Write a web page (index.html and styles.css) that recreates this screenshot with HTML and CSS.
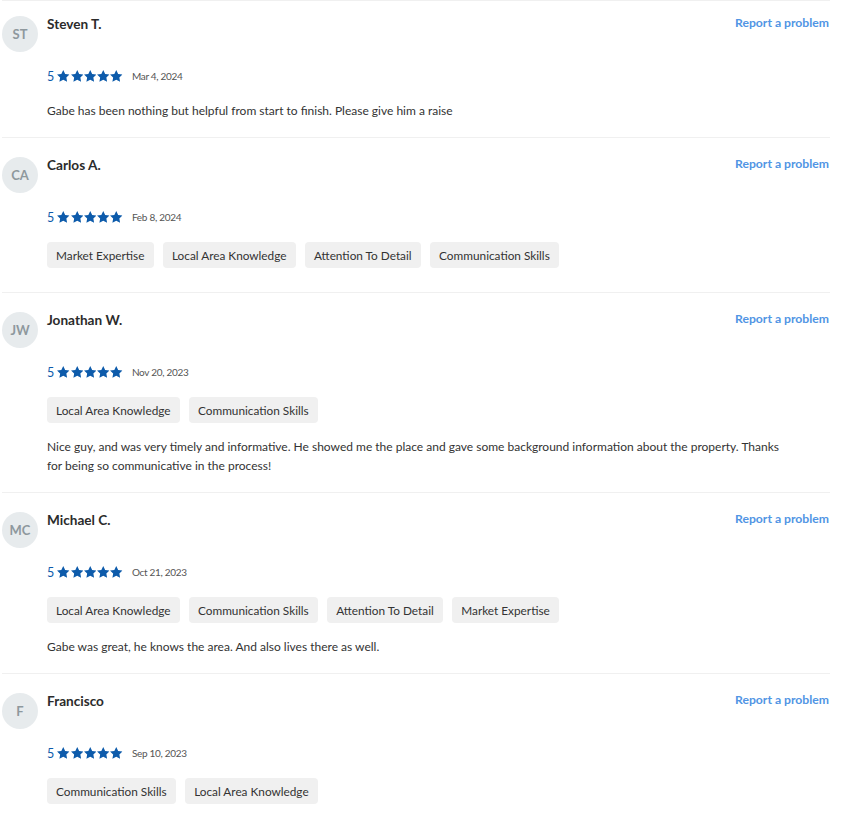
FILE: index.html
```html
<!DOCTYPE html>
<html lang="en">
<head>
<meta charset="utf-8">
<title>Reviews</title>
<link rel="stylesheet" href="styles.css">
</head>
<body>
<svg width="0" height="0" class="defs" aria-hidden="true">
  <defs>
    <symbol id="star" viewBox="2 2 20 19.3">
      <path d="M12 2l3.09 6.26L22 9.27l-5 4.87 1.18 6.88L12 17.77l-6.18 3.25L7 14.14 2 9.27l6.91-1.01L12 2z"/>
    </symbol>
  </defs>
</svg>
<div class="reviews">
  <div class="review">
    <div class="avatar">ST</div>
    <div class="content">
      <div class="head"><span class="name">Steven T.</span><a class="report" href="#">Report a problem</a></div>
      <div class="rating"><span class="score">5</span><span class="stars"><svg><use href="#star"/></svg><svg><use href="#star"/></svg><svg><use href="#star"/></svg><svg><use href="#star"/></svg><svg><use href="#star"/></svg></span><span class="date">Mar 4, 2024</span></div>
      <p class="comment">Gabe has been nothing but helpful from start to finish. Please give him a raise</p>
    </div>
  </div>
  <div class="review">
    <div class="avatar">CA</div>
    <div class="content">
      <div class="head"><span class="name">Carlos A.</span><a class="report" href="#">Report a problem</a></div>
      <div class="rating"><span class="score">5</span><span class="stars"><svg><use href="#star"/></svg><svg><use href="#star"/></svg><svg><use href="#star"/></svg><svg><use href="#star"/></svg><svg><use href="#star"/></svg></span><span class="date">Feb 8, 2024</span></div>
      <div class="tags"><span class="tag">Market Expertise</span><span class="tag">Local Area Knowledge</span><span class="tag">Attention To Detail</span><span class="tag">Communication Skills</span></div>
    </div>
  </div>
  <div class="review">
    <div class="avatar">JW</div>
    <div class="content">
      <div class="head"><span class="name">Jonathan W.</span><a class="report" href="#">Report a problem</a></div>
      <div class="rating"><span class="score">5</span><span class="stars"><svg><use href="#star"/></svg><svg><use href="#star"/></svg><svg><use href="#star"/></svg><svg><use href="#star"/></svg><svg><use href="#star"/></svg></span><span class="date">Nov 20, 2023</span></div>
      <div class="tags"><span class="tag">Local Area Knowledge</span><span class="tag">Communication Skills</span></div>
      <p class="comment">Nice guy, and was very timely and informative. He showed me the place and gave some background information about the property. Thanks for being so communicative in the process!</p>
    </div>
  </div>
  <div class="review">
    <div class="avatar">MC</div>
    <div class="content">
      <div class="head"><span class="name">Michael C.</span><a class="report" href="#">Report a problem</a></div>
      <div class="rating"><span class="score">5</span><span class="stars"><svg><use href="#star"/></svg><svg><use href="#star"/></svg><svg><use href="#star"/></svg><svg><use href="#star"/></svg><svg><use href="#star"/></svg></span><span class="date">Oct 21, 2023</span></div>
      <div class="tags"><span class="tag">Local Area Knowledge</span><span class="tag">Communication Skills</span><span class="tag">Attention To Detail</span><span class="tag">Market Expertise</span></div>
      <p class="comment">Gabe was great, he knows the area. And also lives there as well.</p>
    </div>
  </div>
  <div class="review">
    <div class="avatar">F</div>
    <div class="content">
      <div class="head"><span class="name">Francisco</span><a class="report" href="#">Report a problem</a></div>
      <div class="rating"><span class="score">5</span><span class="stars"><svg><use href="#star"/></svg><svg><use href="#star"/></svg><svg><use href="#star"/></svg><svg><use href="#star"/></svg><svg><use href="#star"/></svg></span><span class="date">Sep 10, 2023</span></div>
      <div class="tags"><span class="tag">Communication Skills</span><span class="tag">Local Area Knowledge</span></div>
    </div>
  </div>
</div>
</body>
</html>
```
FILE: styles.css
```css
* { box-sizing: border-box; }

body {
  margin: 0;
  background: #ffffff;
  font-family: Lato, "Noto Sans", sans-serif;
  color: #333333;
}

.defs { position: absolute; width: 0; height: 0; overflow: hidden; }

.reviews {
  width: 828px;
  margin-left: 2px;
}

.review {
  display: flex;
  gap: 9px;
  border-top: 1px solid #f0f0f0;
  padding: 17px 1px 10px 0;
}

.review:first-child {
  padding-top: 13px;
}

.avatar {
  flex: none;
  width: 36px;
  height: 36px;
  margin-top: 2px;
  border-radius: 50%;
  background: #e7ebed;
  color: #8e989d;
  font-size: 13px;
  font-weight: 700;
  display: flex;
  align-items: center;
  justify-content: center;
}

.content {
  flex: 1;
  min-width: 0;
}

.head {
  display: flex;
  justify-content: space-between;
  align-items: flex-start;
  height: 20px;
}

.name {
  font-size: 13.6px;
  line-height: 20px;
  font-weight: 700;
  color: #2b2b2b;
}

.report {
  font-size: 12.2px;
  line-height: 18px;
  font-weight: 700;
  color: #5195e4;
  text-decoration: none;
}

.rating {
  display: flex;
  align-items: center;
  height: 16px;
  margin-top: 34px;
  margin-bottom: 17px;
}

.score {
  font-size: 12.5px;
  font-weight: 400;
  color: #0d5bab;
  margin-right: 3px;
}

.stars {
  display: flex;
  gap: 0.8px;
}

.stars svg {
  width: 12.5px;
  height: 12px;
  fill: #0d5bab;
}

.date {
  font-size: 10px;
  letter-spacing: -0.3px;
  color: #555555;
  margin-left: 9px;
}

.tags {
  display: flex;
  flex-wrap: wrap;
  gap: 9px;
  margin-bottom: 14px;
}

.tag {
  display: inline-flex;
  align-items: center;
  height: 26px;
  padding: 0 9.5px 0 9px;
  border-radius: 4px;
  background: #f0f0f0;
  font-size: 11.8px;
  color: #333333;
}

.comment {
  margin: 0 0 7px;
  max-width: 738px;
  font-size: 12px;
  line-height: 19px;
  color: #333333;
}
```
